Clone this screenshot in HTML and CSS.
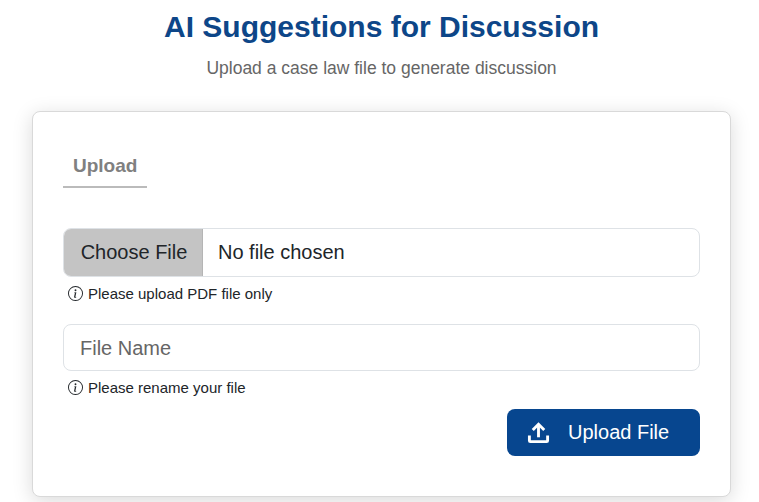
FILE: index.html
```html
<!DOCTYPE html>
<html lang="en">
<head>
  <meta charset="UTF-8">
  <meta name="viewport" content="width=device-width, initial-scale=1.0">
  <title>AI Suggestions for Discussion</title>
  <link rel="stylesheet" href="styles.css">
</head>
<body>
  <h1 class="title">AI Suggestions for Discussion</h1>
  <p class="subtitle">Upload a case law file to generate discussion</p>

  <div class="card">
    <div class="tabs">
      <div class="tab">Upload</div>
    </div>

    <input type="file" class="file-input">
    <div class="hint">
      <svg class="info-icon" viewBox="0 0 16 16" fill="currentColor">
        <path d="M8 15A7 7 0 1 1 8 1a7 7 0 0 1 0 14zm0 1A8 8 0 1 0 8 0a8 8 0 0 0 0 16z"/>
        <path d="m8.93 6.59-2.29.29-.08.38.45.08c.29.07.35.18.29.47l-.74 3.47c-.19.9.11 1.32.81 1.32.55 0 1.18-.25 1.47-.6l.09-.42c-.2.18-.5.25-.69.25-.27 0-.37-.19-.3-.53L8.93 6.59zM9 4.5a1 1 0 1 1-2 0 1 1 0 0 1 2 0z"/>
      </svg>
      Please upload PDF file only
    </div>

    <input type="text" class="text-input" placeholder="File Name">
    <div class="hint">
      <svg class="info-icon" viewBox="0 0 16 16" fill="currentColor">
        <path d="M8 15A7 7 0 1 1 8 1a7 7 0 0 1 0 14zm0 1A8 8 0 1 0 8 0a8 8 0 0 0 0 16z"/>
        <path d="m8.93 6.59-2.29.29-.08.38.45.08c.29.07.35.18.29.47l-.74 3.47c-.19.9.11 1.32.81 1.32.55 0 1.18-.25 1.47-.6l.09-.42c-.2.18-.5.25-.69.25-.27 0-.37-.19-.3-.53L8.93 6.59zM9 4.5a1 1 0 1 1-2 0 1 1 0 0 1 2 0z"/>
      </svg>
      Please rename your file
    </div>

    <div class="actions">
      <button class="upload-button">
        <svg class="upload-icon" viewBox="0 0 24 24" fill="none" stroke="currentColor" stroke-width="3">
          <path d="M2.5 15v5.5a1 1 0 0 0 1 1h17a1 1 0 0 0 1-1V15"/>
          <path d="M12 17V4"/>
          <path d="M6 9.5 12 3.500l6 6" stroke-linejoin="miter"/>
        </svg>
        Upload File
      </button>
    </div>
  </div>
</body>
</html>
```

FILE: styles.css
```css
* {
  box-sizing: border-box;
}
body {
  margin: 0;
  height: 502px;
  overflow: hidden;
  background-color: white;
  font-family: "Liberation Sans", Arial, sans-serif;
  padding: 0 28px 0 32px;
}
.title {
  margin: 9px 0 0;
  font-size: 30px;
  line-height: 36px;
  font-weight: bold;
  color: #0d4688;
  text-align: center;
}
.subtitle {
  margin: 12px 0 0;
  font-size: 17.5px;
  line-height: 22px;
  color: #666666;
  text-align: center;
}
.card {
  margin-top: 32px;
  height: 386px;
  padding: 30px 30px 0;
  background-color: white;
  border: 1px solid #d9d9d9;
  border-radius: 8px;
  box-shadow: 0 4px 20px rgba(0, 0, 0, 0.15);
}
.tabs {
  display: flex;
  margin-bottom: 40px;
}
.tab {
  padding: 13px 10px 9px;
  width: 84px;
  font-size: 19px;
  line-height: 22px;
  font-weight: bold;
  color: #808080;
  border-bottom: 2px solid #bbbbbb;
}
.file-input {
  display: block;
  width: 100%;
  height: 49px;
  border: 1px solid #dee2e6;
  border-radius: 8px;
  overflow: hidden;
  font-family: inherit;
  font-size: 20px;
  color: #212529;
  background-color: white;
}
.file-input::file-selector-button {
  width: 139px;
  height: 49px;
  margin: -1px 15px 0 0;
  padding: 0 0 0 2px;
  border: none;
  border-right: 1px solid #b5b5b5;
  background-color: #c4c4c4;
  font-family: inherit;
  font-size: 20px;
  color: #212529;
}
.text-input {
  display: block;
  width: 100%;
  height: 47px;
  margin-top: 0;
  padding: 1px 16px 0;
  border: 1px solid #dee2e6;
  border-radius: 8px;
  font-family: inherit;
  font-size: 20px;
  color: #212529;
}
.text-input::placeholder {
  color: #666666;
  opacity: 1;
}
.hint {
  display: flex;
  align-items: center;
  gap: 5px;
  height: 16px;
  margin: 8px 0 23px 5px;
  font-size: 15px;
  line-height: 15px;
  color: #212529;
}
.info-icon {
  width: 15px;
  height: 15px;
}
.actions {
  display: flex;
  justify-content: flex-end;
  margin-top: -9px;
}
.upload-button {
  display: flex;
  align-items: center;
  gap: 18px;
  width: 193px;
  height: 47px;
  padding: 0 0 0 20px;
  border: none;
  border-radius: 8px;
  background-color: #07468f;
  font-family: inherit;
  font-size: 20px;
  color: white;
}
.upload-icon {
  width: 23px;
  height: 23px;
}
```
